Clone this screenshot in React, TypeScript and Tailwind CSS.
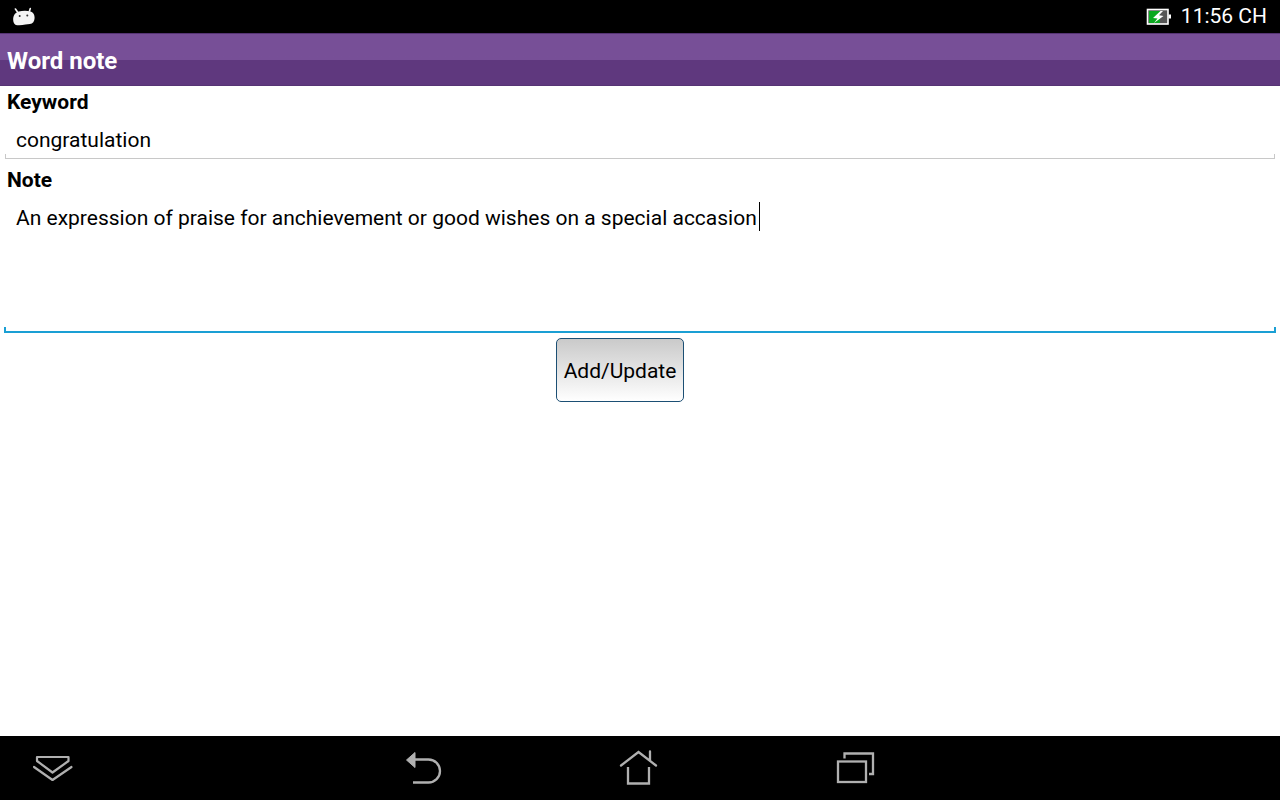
import { useState } from "react";

function StatusBar() {
  return (
    <header className="flex h-[33px] shrink-0 items-center justify-between bg-black pr-[13px] pl-3 text-white">
      <svg width="24" height="20" viewBox="0 0 24 20" aria-hidden="true">
        <path d="M3.4 2 5.500 5M18.3 1.500 17.500 4" stroke="#f4f4f4" strokeWidth="1.600" strokeLinecap="round" />
        <path d="M1.2 13.2C1 8.500 3 5.700 6.800 4.500c3.4-1 8-1 11.2-.3 3.400.8 4.700 3.700 4.600 6.800-.1 3.500-1.800 5.600-4.700 6.100-1.600.3-2.800.2-4.400.400-2.700.500-5.500 1.200-8.500.7-2.500-.500-3.700-2.300-3.800-5z" fill="#f4f4f4" />
        <circle cx="7.700" cy="9" r="1" fill="#333" />
        <circle cx="15.300" cy="8.500" r="1" fill="#333" />
      </svg>
      <div className="flex items-center gap-[10px]">
        <svg width="25" height="18" viewBox="0 0 25 18" aria-label="Battery charging" role="img">
          <rect x="1.500" y="1.500" width="20.500" height="14.500" fill="#555" stroke="#fff" strokeWidth="1.600" />
          <path d="M22.500 6.500H25v4h-2.500z" fill="#fff" />
          <path d="M3 3h11v12H3z" fill="#0aa81f" />
          <path d="M14.500 3 7 10l4.500.5-3.500 4.500 9.500-7-4.500-.7L17 3z" fill="#fff" />
        </svg>
        <span className="pb-[2px] text-[21px] leading-[30px]">11:56 CH</span>
      </div>
    </header>
  );
}

function NavBar() {
  return (
    <nav className="grid h-16 shrink-0 grid-cols-[32fr_372fr_215fr_216fr_445fr] bg-black text-[#b0b0b0]">
      <span />
      <button type="button" aria-label="Hide" className="flex items-center">
        <svg width="42" height="40" viewBox="0 0 42 40" fill="none" stroke="currentColor" strokeWidth="2.200" strokeLinejoin="round" strokeLinecap="round">
          <path d="M5 9h31.500v4L20.500 24.500 5 13z" />
          <path d="m2 19 18.500 13L39.500 19" />
        </svg>
      </button>
      <button type="button" aria-label="Back" className="flex items-center">
        <svg width="40" height="40" viewBox="0 0 40 40" fill="none">
          <path d="M2.500 12 11 4.500v15z" fill="currentColor" stroke="currentColor" strokeLinejoin="round" />
          <path d="M10 11.500h14.500a11.200 11.200 0 0 1 0 23H9" stroke="currentColor" strokeWidth="2.300" />
        </svg>
      </button>
      <button type="button" aria-label="Home" className="flex items-center">
        <svg width="40" height="40" viewBox="0 0 40 40" fill="none" stroke="currentColor" strokeWidth="2.300" strokeLinecap="round">
          <path d="M2 17.500 19.500 4 37 17.500M31 12V3.500" />
          <path d="M9 19v16.500h21V19" strokeLinecap="butt" strokeLinejoin="miter" />
        </svg>
      </button>
      <button type="button" aria-label="Recent apps" className="flex items-center">
        <svg width="42" height="40" viewBox="0 0 42 40" fill="none" stroke="currentColor" strokeWidth="2.300">
          <rect x="3" y="13.500" width="28" height="20.500" />
          <path d="M9.500 10.500V5.500h28.500v20.500h-4" />
        </svg>
      </button>
    </nav>
  );
}

export default function App() {
  const [keyword, setKeyword] = useState("congratulation");
  const [note, setNote] = useState(
    "An expression of praise for anchievement or good wishes on a special accasion",
  );

  return (
    <div className="flex min-h-screen flex-col bg-white font-['Roboto',sans-serif] text-black">
      <StatusBar />
      <div className="flex h-[53px] shrink-0 items-center border-y border-[#563474] bg-linear-to-b from-[#774f97] from-51% to-[#5f387e] to-51% px-[7px] pt-[2px]">
        <h1 className="text-[24px] leading-8 font-bold text-white">Word note</h1>
      </div>
      <form className="flex flex-1 flex-col" onSubmit={(e) => e.preventDefault()}>
        <label htmlFor="keyword" className="px-[7px] pt-1 text-[21px] leading-6 font-bold">
          Keyword
        </label>
        <div className="flex flex-col px-[5px] pt-3">
          <input
            id="keyword"
            value={keyword}
            onChange={(e) => setKeyword(e.target.value)}
            className="h-7 px-[11px] text-[21px] leading-7 outline-none"
          />
          <div className="h-[5px] border-x border-b border-[#c8c8c8]" />
        </div>
        <label htmlFor="note" className="px-[7px] pt-[9px] text-[21px] leading-6 font-bold">
          Note
        </label>
        <div className="relative flex flex-col px-1 pt-3">
          <textarea
            id="note"
            value={note}
            onChange={(e) => setNote(e.target.value)}
            className="h-[123px] resize-none px-3 text-[21px] leading-7 caret-transparent outline-none"
          />
          <span aria-hidden="true" className="pointer-events-none absolute top-[10px] left-[759px] h-[29px] w-px bg-black" />
          <div className="h-[6px] border-x-2 border-b-2 border-[#1a9fd4]" />
        </div>
        <div className="flex justify-center pt-[5px] pr-10">
          <button
            type="submit"
            className="h-16 w-32 rounded-[5px] border border-[#1c4f74] bg-linear-to-b from-[#cacaca] to-white pt-[2px] text-[21px] leading-7"
          >
            Add/Update
          </button>
        </div>
      </form>
      <NavBar />
    </div>
  );
}
